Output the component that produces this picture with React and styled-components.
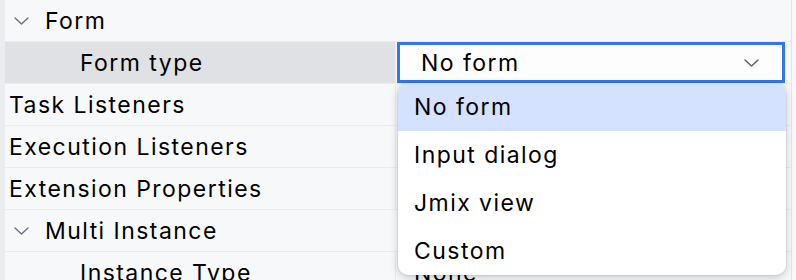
import React from "react";
import styled, { createGlobalStyle } from "styled-components";

const Global = createGlobalStyle`
  html, body { margin: 0; padding: 0; }
  body {
    background: #f7f8fa;
    font-family: Inter, "Noto Sans", sans-serif;
    color: #000;
    overflow: hidden;
  }
`;

const Page = styled.div`
  position: relative;
  display: flex;
  width: 796px;
  height: 280px;
  overflow: hidden;
`;

const LeftStrip = styled.div`
  width: 5px;
  flex: none;
  background: #ebecf0;
`;

const Table = styled.div`
  flex: 1;
  display: flex;
  flex-direction: column;
  border-right: 1px solid #e4e5e9;
`;

const RightStrip = styled.div`
  width: 4px;
  flex: none;
  background: #f7f8fa;
`;

const Row = styled.div`
  display: grid;
  grid-template-columns: 391px 1fr;
  height: 42px;
  flex: none;
  box-sizing: border-box;
  border-bottom: 1px solid #ebecf0;
`;

const Label = styled.span`
  font-size: 23px;
  letter-spacing: 1.45px;
`;

const NameCell = styled.div`
  display: flex;
  align-items: center;
  gap: 15px;
  padding-left: ${(p) => p.$indent}px;
  background: ${(p) => (p.$selected ? "#dfe1e5" : "transparent")};
  border-right: 1px solid ${(p) => (p.$group ? "transparent" : "#ebecf0")};
  white-space: nowrap;
  overflow: hidden;
`;

const ValueCell = styled.div`
  display: flex;
  align-items: center;
  padding-left: 18px;
  position: relative;
  white-space: nowrap;
`;

const Chevron = styled.svg`
  width: 17px;
  height: 10px;
  flex: none;
`;

const Combo = styled.div`
  position: absolute;
  left: 1px;
  top: 0;
  width: 388px;
  height: 41px;
  box-sizing: border-box;
  border: 3px solid #3574f0;
  background: #fdfdfd;
  display: flex;
  align-items: center;
  justify-content: space-between;
  padding: 0 22px 0 21px;
`;

const Popup = styled.div`
  position: absolute;
  left: 398px;
  top: 83px;
  width: 388px;
  background: #ffffff;
  border-radius: 10px;
  box-shadow: 0 3px 10px rgba(0, 0, 0, 0.18), 0 0 0 1px rgba(0, 0, 0, 0.06);
  overflow: hidden;
  display: flex;
  flex-direction: column;
`;

const Item = styled.div`
  height: 48px;
  display: flex;
  align-items: center;
  padding-left: 16px;
  background: ${(p) => (p.$active ? "#d4e2ff" : "transparent")};
`;

const Arrow = ({ color = "#6c707e" }) => (
  <Chevron viewBox="0 0 17 10">
    <polyline
      points="2,2 8.5,8 15,2"
      fill="none"
      stroke={color}
      strokeWidth="1.4"
      strokeLinecap="round"
      strokeLinejoin="round"
    />
  </Chevron>
);

const rows = [
  { name: "Form", indent: 8, group: true },
  { name: "Form type", indent: 75, selected: true, combo: true },
  { name: "Task Listeners", indent: 4 },
  { name: "Execution Listeners", indent: 4 },
  { name: "Extension Properties", indent: 4 },
  { name: "Multi Instance", indent: 8, group: true },
  { name: "Instance Type", indent: 75, value: "None" },
];

export default function App() {
  return (
    <>
      <Global />
      <Page>
        <LeftStrip />
        <Table>
          {rows.map((r) => (
            <Row key={r.name}>
              <NameCell $indent={r.indent} $selected={r.selected} $group={r.group}>
                {r.group && <Arrow />}
                <Label>{r.name}</Label>
              </NameCell>
              <ValueCell>
                {r.combo && (
                  <Combo>
                    <Label>No form</Label>
                    <Arrow color="#5a5d63" />
                  </Combo>
                )}
                {r.value && <Label>{r.value}</Label>}
              </ValueCell>
            </Row>
          ))}
        </Table>
        <RightStrip />
        <Popup>
          <Item $active><Label>No form</Label></Item>
          <Item><Label>Input dialog</Label></Item>
          <Item><Label>Jmix view</Label></Item>
          <Item><Label>Custom</Label></Item>
        </Popup>
      </Page>
    </>
  );
}
